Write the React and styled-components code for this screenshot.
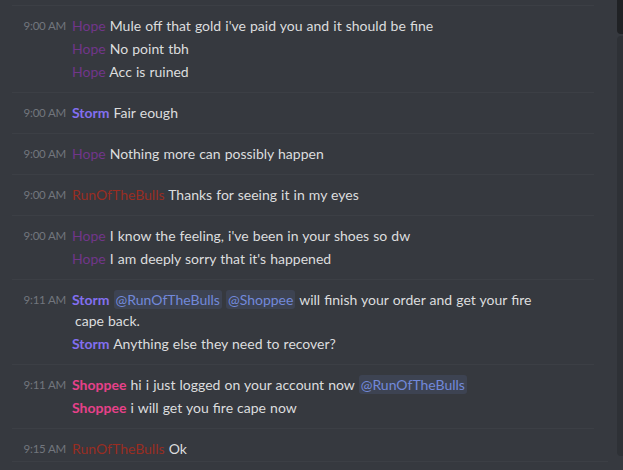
import React from "react";
import styled, { createGlobalStyle } from "styled-components";

const Global = createGlobalStyle`
  html, body { margin: 0; padding: 0; background: #36393f; }
  body { font-family: "Lato", "Open Sans", sans-serif; }
`;

const Chat = styled.div`
  position: relative;
  width: 623px;
  height: 470px;
  overflow: hidden;
  background: #36393f;
  padding-top: 5px;
  box-sizing: border-box;
`;

const Group = styled.div`
  display: grid;
  grid-template-columns: 54px 1fr;
  column-gap: 6px;
  margin: 0 ${(p) => (p.$last ? 15 : 29)}px 0 12px;
  padding: 9px 0 ${(p) => (p.$last ? 0 : 8)}px;
  border-top: ${(p) => (p.$first ? "1px solid #3c3f45" : "none")};
  border-bottom: 1px solid #3c3f45;
`;

const Stamp = styled.div`
  font-size: 11.5px;
  color: #72767d;
  text-align: right;
  line-height: 21px;
  letter-spacing: -0.2px;
  white-space: nowrap;
`;

const Lines = styled.div`
  display: flex;
  flex-direction: column;
  padding-right: 44px;
`;

const Line = styled.div`
  font-size: 14px;
  line-height: 21px;
  padding: 0 0 2px 3px;
  text-indent: -3px;
  color: #dcddde;
  word-spacing: 0.5px;
`;

const Name = styled.span`
  color: ${(p) => p.$color};
  font-weight: ${(p) => (p.$bold ? 700 : 400)};
`;

const Mention = styled.span`
  color: #7289da;
  background: rgba(114, 137, 218, 0.12);
  padding: 1px 2px;
  border-radius: 3px;
`;

const Track = styled.div`
  position: absolute;
  right: 0;
  top: 36px;
  width: 6px;
  height: 420px;
  background: #2e3136;
  border-radius: 4px 0 0 4px;
`;

const Thumb = styled.div`
  position: absolute;
  right: 0;
  top: 0;
  width: 6px;
  height: 34px;
  background: #202225;
  border-radius: 0 0 0 4px;
`;

const USERS = {
  Hope: { color: "#71368a", bold: false },
  Storm: { color: "#836ff0", bold: true },
  RunOfTheBulls: { color: "#992d22", bold: false },
  Shoppee: { color: "#e7418a", bold: true },
};

const groups = [
  {
    time: "9:00 AM",
    msgs: [
      ["Hope", "Mule off that gold i've paid you and it should be fine"],
      ["Hope", "No point tbh"],
      ["Hope", "Acc is ruined"],
    ],
  },
  { time: "9:00 AM", msgs: [["Storm", "Fair eough"]] },
  { time: "9:00 AM", msgs: [["Hope", "Nothing more can possibly happen"]] },
  { time: "9:00 AM", msgs: [["RunOfTheBulls", "Thanks for seeing it in my eyes"]] },
  {
    time: "9:00 AM",
    msgs: [
      ["Hope", "I know the feeling, i've been in your shoes so dw"],
      ["Hope", "I am deeply sorry that it's happened"],
    ],
  },
  {
    time: "9:11 AM",
    msgs: [
      [
        "Storm",
        <>
          <Mention>@RunOfTheBulls</Mention> <Mention>@Shoppee</Mention> will finish your order and
          get your fire cape back.
        </>,
      ],
      ["Storm", "Anything else they need to recover?"],
    ],
  },
  {
    time: "9:11 AM",
    msgs: [
      [
        "Shoppee",
        <>
          hi i just logged on your account now <Mention>@RunOfTheBulls</Mention>
        </>,
      ],
      ["Shoppee", "i will get you fire cape now"],
    ],
  },
  { time: "9:15 AM", msgs: [["RunOfTheBulls", "Ok"]], last: true },
];

export default function App() {
  return (
    <>
      <Global />
      <Chat>
        {groups.map((g, i) => (
          <Group key={i} $first={i === 0} $last={g.last}>
            <Stamp>{g.time}</Stamp>
            <Lines>
              {g.msgs.map(([user, text], j) => (
                <Line key={j}>
                  <Name $color={USERS[user].color} $bold={USERS[user].bold}>
                    {user}
                  </Name>{" "}
                  {text}
                </Line>
              ))}
            </Lines>
          </Group>
        ))}
        <Thumb />
        <Track />
      </Chat>
    </>
  );
}
